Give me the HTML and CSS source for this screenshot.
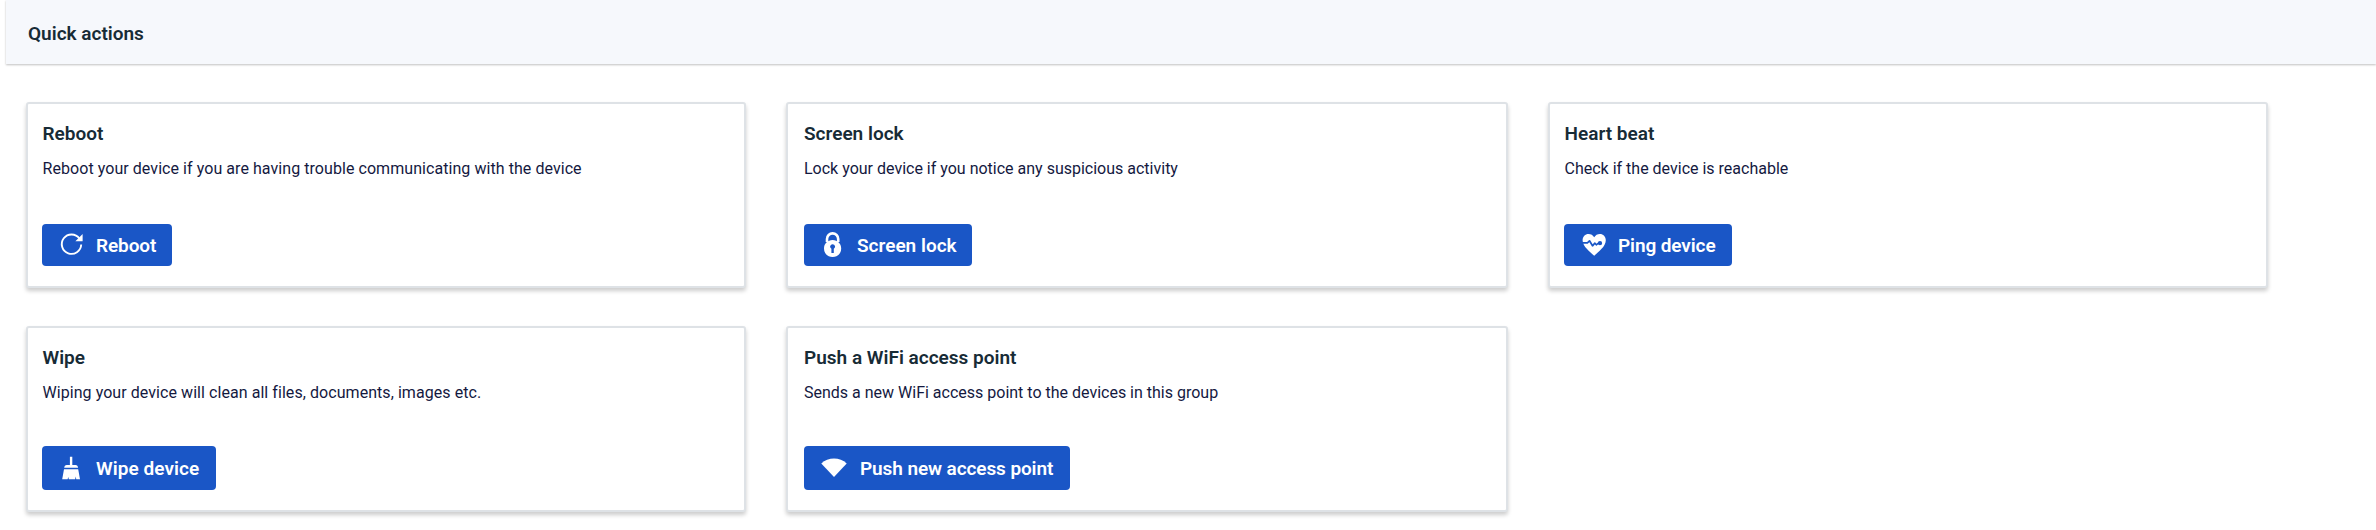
FILE: index.html
```
<!DOCTYPE html>
<html lang="en">
<head>
<meta charset="utf-8">
<title>Quick actions</title>
<link rel="stylesheet" href="styles.css">
</head>
<body>
<section class="panel">
  <header class="panel-header"><h1>Quick actions</h1></header>
  <div class="cards">
    <article class="card">
      <h2>Reboot</h2>
      <p class="airy">Reboot your device if you are having trouble communicating with the device</p>
      <button class="btn btn-reboot">
        <svg class="icon" viewBox="0 0 28 28"><path d="M21.4 7.5A9.7 9.7 0 1 0 23.2 13.5" fill="none" stroke="#fff" stroke-width="1.9"/><path d="M24.6 3v7.2h-7.2z"/></svg>
        <span>Reboot</span>
      </button>
    </article>
    <article class="card card-middle">
      <h2>Screen lock</h2>
      <p>Lock your device if you notice any suspicious activity</p>
      <button class="btn btn-lock">
        <svg class="icon" viewBox="0 0 28 28"><path d="M7 11V8a5.600 5.600 0 0 1 11.200 0v3" fill="none" stroke="#fff" stroke-width="2.600"/><path fill-rule="evenodd" d="M12.600 9c5 0 8.600 3.600 8.600 8.500S17.600 26 12.600 26 4 22.400 4 17.500 7.600 9 12.600 9zm0 4.200a2.400 2.400 0 0 0-1.200 4.500v4.300h2.400v-4.300a2.400 2.400 0 0 0-1.200-4.500z"/></svg>
        <span>Screen lock</span>
      </button>
    </article>
    <article class="card">
      <h2>Heart beat</h2>
      <p>Check if the device is reachable</p>
      <button class="btn btn-ping">
        <svg class="icon" viewBox="0 0 28 28"><path d="M14.200 24.800C10 20.600 2.600 15.600 2.600 9.200 2.600 5.400 5.200 2.900 8.500 2.900c2.400 0 4.500 1.200 5.700 3.300 1.200-2.100 3.300-3.300 5.700-3.300 3.300 0 5.900 2.500 5.900 6.300 0 6.400-7.400 11.400-11.600 15.600z"/><g stroke="#1a56c6" fill="none" stroke-width="1.700" stroke-linejoin="round"><path d="M2 11.800h5.400l2.100-2 3 5 2.400-2.600 1.400 1.600 1.800-1.400h1.600"/><circle cx="20" cy="12.200" r="1.300" fill="#1a56c6"/></g></svg>
        <span>Ping device</span>
      </button>
    </article>
    <article class="card card-tall-btn">
      <h2>Wipe</h2>
      <p class="airy">Wiping your device will clean all files, documents, images etc.</p>
      <button class="btn btn-wipe">
        <svg class="icon" viewBox="0 0 28 28"><path d="M11.900 2.700h2.400v8.200h3.200c1.500 0 2.500 1 2.600 2.900H6.200c.1-1.900 1.100-2.900 2.600-2.900h3.100zM6 15.300h14.200L22 25.300h-3.700l-.7-2.700-.4 2.700H10.800l-.5-2.200-.7 2.200H4.200z"/></svg>
        <span>Wipe device</span>
      </button>
    </article>
    <article class="card card-middle card-tall-btn">
      <h2>Push a WiFi access point</h2>
      <p>Sends a new WiFi access point to the devices in this group</p>
      <button class="btn btn-push">
        <svg class="icon" viewBox="0 0 28 28"><path d="M14 23L1.300 9.400C8 2.900 20 2.900 26.700 9.400z"/></svg>
        <span>Push new access point</span>
      </button>
    </article>
  </div>
</section>
</body>
</html>
```
FILE: styles.css
```
body {
  margin: 0;
  min-height: 530px;
  background: #fff;
  font-family: Roboto, "Liberation Sans", sans-serif;
}
h1, h2, p { margin: 0; }
h1, h2 {
  font-size: 19px;
  line-height: 24px;
  font-weight: 600;
  color: #172b36;
}
.panel { padding-left: 6px; }
.panel-header {
  height: 64px;
  box-sizing: border-box;
  padding: 22px 22px 0;
  background: #f6f8fc;
  box-shadow: 0 1px 2px rgba(0, 0, 0, 0.25);
}
.cards {
  display: grid;
  grid-template-columns: 720px 722px 720px;
  grid-auto-rows: 186px;
  gap: 38px 40px;
  padding: 38px 20px 18px;
}
.card {
  box-sizing: border-box;
  display: flex;
  flex-direction: column;
  align-items: flex-start;
  padding: 18px 14px 0;
  border: 2px solid #dee2e6;
  border-radius: 3px;
  background: #fff;
  box-shadow: 0 3px 4px rgba(0, 0, 0, 0.2);
}
.card h2, .card p { padding-left: 0.5px; }
.card-middle { padding-left: 16px; }
.card-middle h2, .card-middle p { padding-left: 0; }
.card p {
  margin-top: 11px;
  font-size: 16px;
  line-height: 24px;
  color: #14193f;
}
.card .airy { letter-spacing: 0.06px; }
.btn {
  display: flex;
  align-items: center;
  gap: 10px;
  box-sizing: border-box;
  height: 42px;
  margin-top: 43px;
  padding: 0 0 0 16px;
  border: 0;
  border-radius: 4px;
  background: #1a56c6;
  color: #fff;
  font: 600 19px/24px Roboto, "Liberation Sans", sans-serif;
  white-space: nowrap;
}
.btn span { padding-top: 1px; }
.card-tall-btn .btn { height: 44px; margin-top: 41px; }
.btn-reboot { width: 130px; letter-spacing: -0.09px; }
.btn-lock { width: 168px; gap: 9px; }
.btn-ping { width: 168px; letter-spacing: -0.1px; }
.btn-wipe { width: 174px; letter-spacing: 0.06px; }
.btn-push { width: 266px; gap: 12px; letter-spacing: -0.1px; }
.icon {
  flex: none;
  width: 28px;
  height: 28px;
  fill: #fff;
}
```
